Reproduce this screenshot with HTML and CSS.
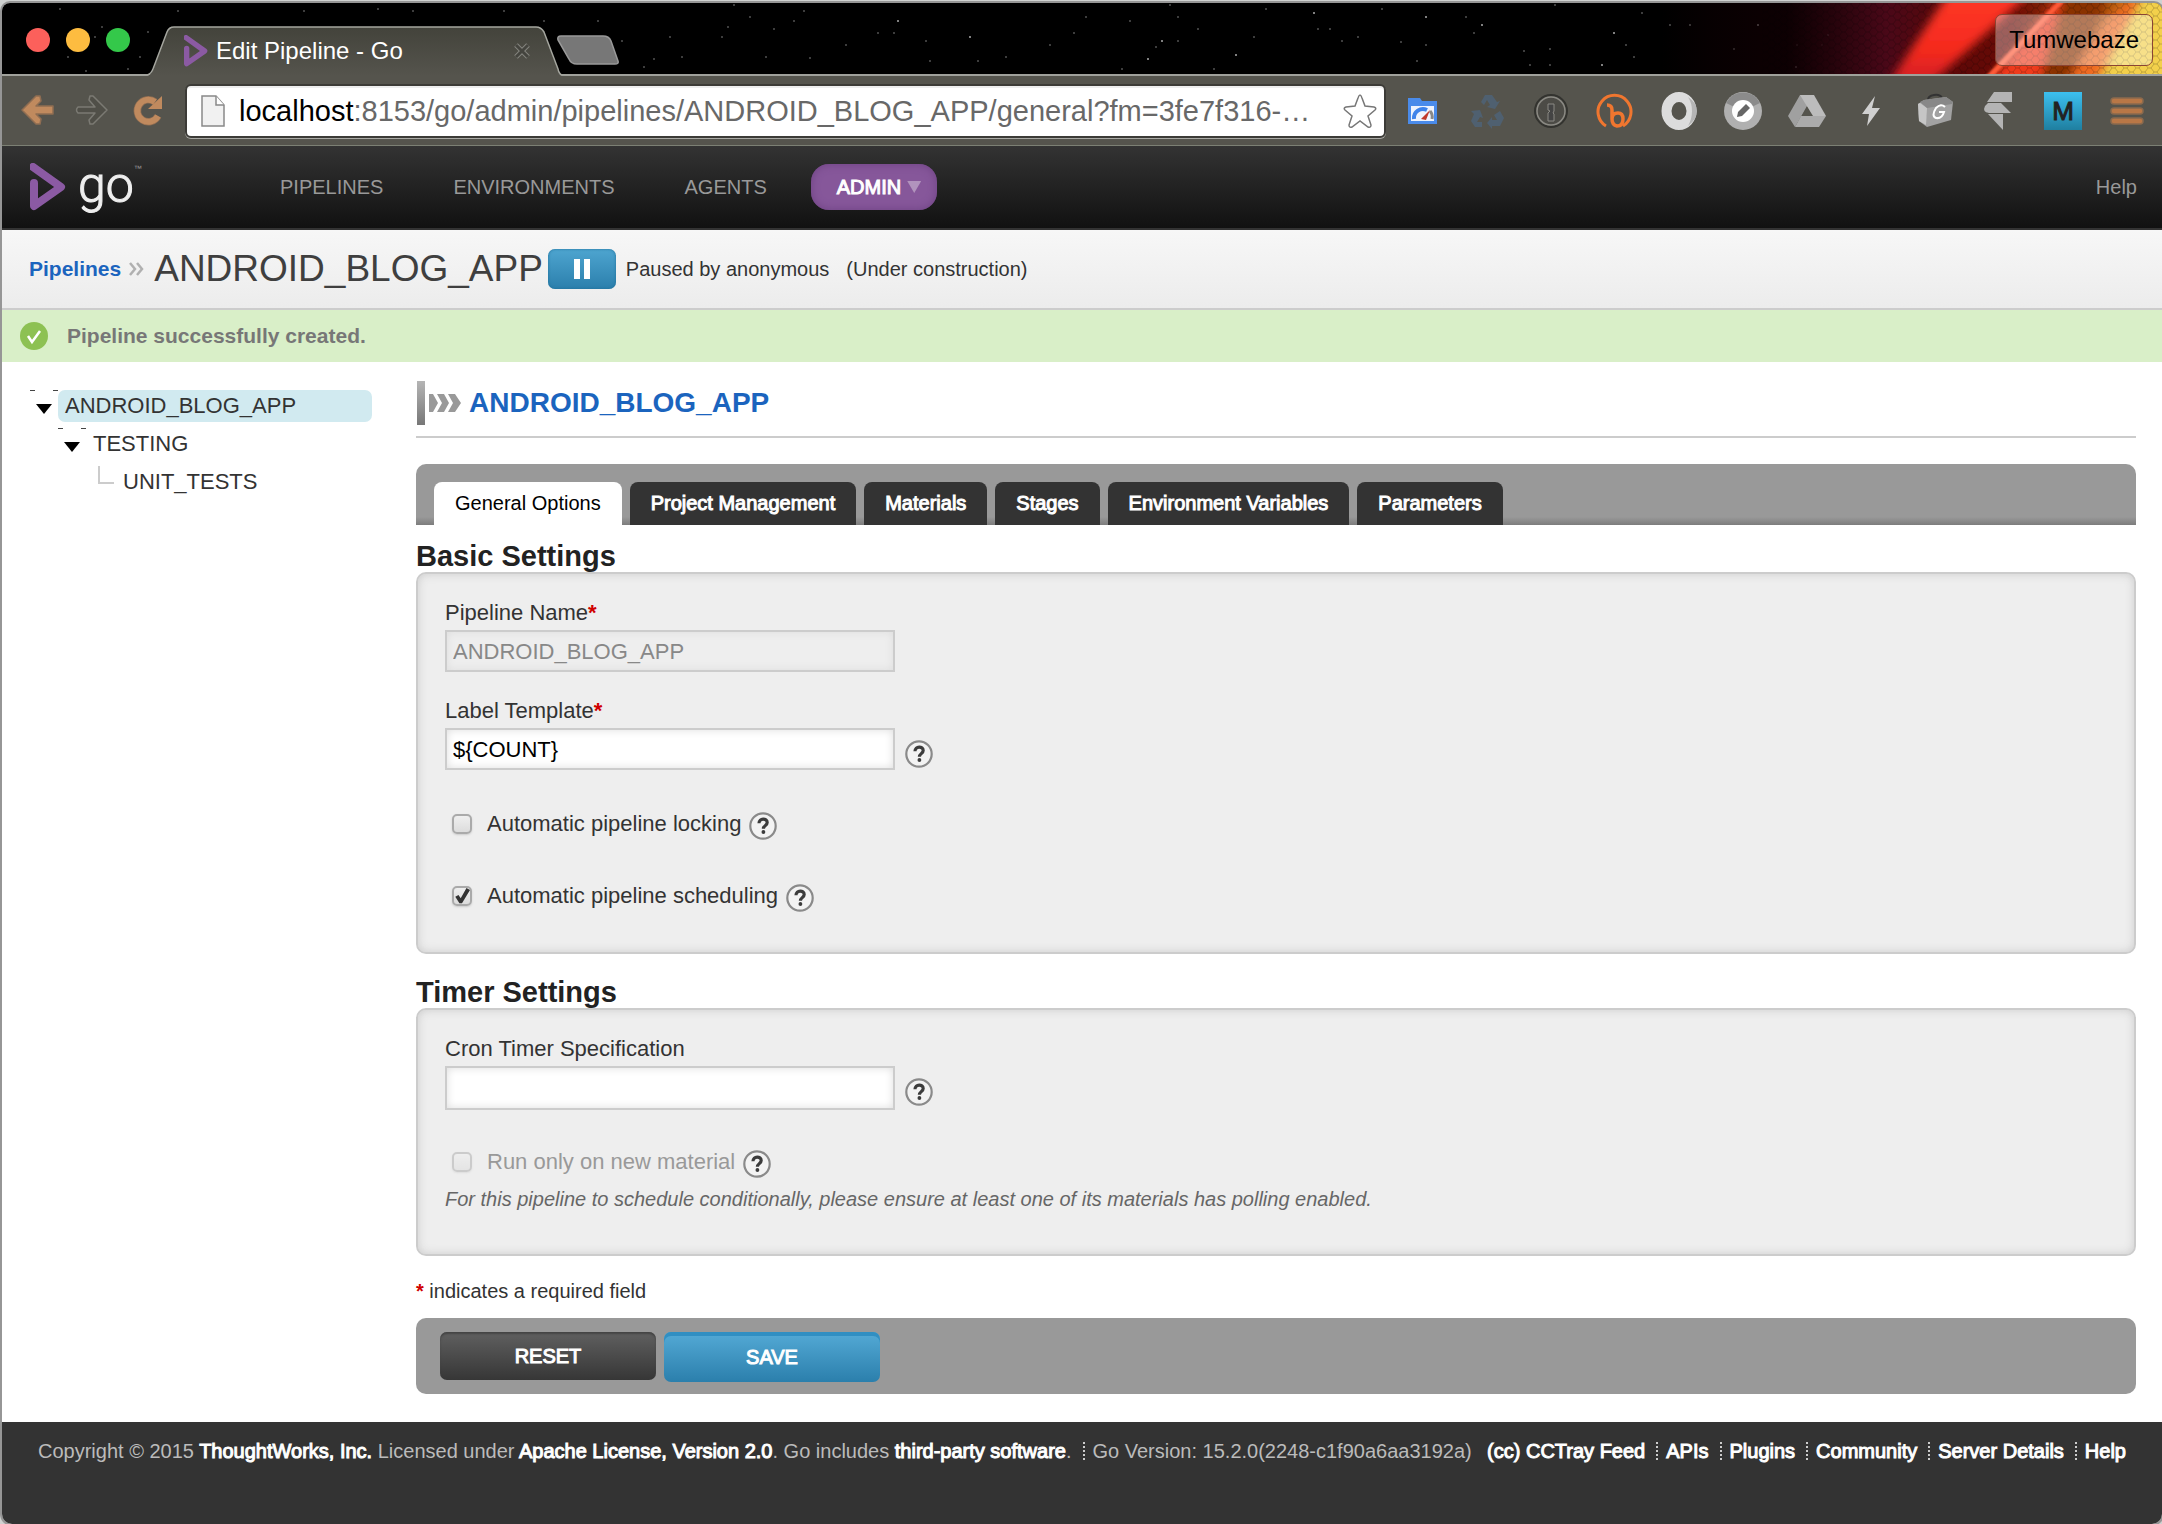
FILE: index.html
```html
<!DOCTYPE html>
<html lang="en">
<head>
<meta charset="utf-8">
<title>Edit Pipeline - Go</title>
<link rel="stylesheet" href="styles.css">
</head>
<body>
<svg class="defs" aria-hidden="true">
  <defs>
    <symbol id="help" viewBox="0 0 28 28">
      <circle cx="14" cy="14" r="12.7" fill="#f3f3f3" stroke="#8a8a8a" stroke-width="2.2"/>
      <path d="M10 11.200c0-5.500 8.200-5.300 8.200-.7 0 3-3.800 3.200-3.800 6.200" fill="none" stroke="#3c3c3c" stroke-width="3.200"/>
      <circle cx="14.400" cy="20" r="1.900" fill="#3c3c3c"/>
    </symbol>
    <symbol id="go-mark" viewBox="0 0 36 48">
      <path d="M3 4L31 24 4 43V20" fill="none" stroke="#8b5aa3" stroke-width="8" stroke-linecap="round" stroke-linejoin="round"/>
    </symbol>
  </defs>
</svg>

<div class="window">
  <div class="tabstrip">
    <svg class="stars" aria-hidden="true"><path stroke="#3d3d3d" stroke-width="2" d="M57 6h2M175 8h2M301 8h2M375 6h2M410 8h2M501 8h2M541 18h2M595 18h2M667 34h2M619 38h2M99 24h2M145 29h2M92 34h2M65 54h2M137 54h2M83 68h2M125 66h2M679 54h2M641 64h2M651 56h2M731 2h2M747 14h2M801 8h2M725 24h2M719 34h2M771 26h2M791 18h2M875 30h2M891 30h2M843 42h2M763 54h2M807 55h2M975 58h2M927 58h2M1003 54h2M923 38h2M1047 42h2M1071 30h2M1083 14h2M1127 18h2M1167 2h2M1175 14h2M1153 44h2M1175 38h2M1119 66h2M1195 26h2M1211 66h2M1251 34h2M1263 6h2M1315 26h2M1327 26h2M1339 38h2M1355 34h2M1379 6h2M1398 39h2M1463 14h2M1471 30h2M1423 42h2M1414 58h2M1552 2h2M1639 10h2M1667 22h2M1687 22h2M1521 48h2M1547 46h2M1527 62h2M1547 62h2M1631 54h2M1623 42h2M1794 42h2M1819 42h2M1731 46h2"/><path stroke="#808080" stroke-width="2" d="M895 18h2M967 34h2M1159 38h2M1145 56h2M1233 52h2M1311 10h2M1423 14h2M1479 22h2M1611 30h2M1599 62h2M1755 22h2M1793 64h2M1825 32h2M1895 50h2"/></svg>
    <svg class="flare" viewBox="1662 3 500 72" preserveAspectRatio="xMaxYMin slice" aria-hidden="true">
      <defs>
        <linearGradient id="glow"><stop offset="0" stop-color="#180004" stop-opacity="0"/><stop offset=".25" stop-color="#100003" stop-opacity=".8"/><stop offset=".45" stop-color="#4a0818"/><stop offset=".58" stop-color="#5a0808"/><stop offset=".7" stop-color="#6a0a04"/><stop offset=".88" stop-color="#a84a0a"/><stop offset="1" stop-color="#d99a20"/></linearGradient>
        <linearGradient id="beam" x1="0" y1="1" x2="0" y2="0"><stop offset="0" stop-color="#c81c24"/><stop offset=".4" stop-color="#f52a1e"/><stop offset="1" stop-color="#ff3a28"/></linearGradient>
        <pattern id="hex" width="12" height="8" patternUnits="userSpaceOnUse"><path d="M0 4h3l3-4h3l3 4M3 4l3 4h3l3-4" fill="none" stroke="#000" stroke-opacity=".2"/></pattern>
        <filter id="soft" x="-20%" y="-20%" width="140%" height="140%"><feGaussianBlur stdDeviation="5"/></filter>
        <filter id="fine"><feGaussianBlur stdDeviation="1"/></filter>
      </defs>
      <rect x="1662" y="3" width="500" height="72" fill="url(#glow)"/>
      <path d="M1985 85L2066 -10H2084L2050 85z" fill="#f03a1c" filter="url(#soft)"/>
      <path d="M2040 85L2066 -10H2110L2070 85z" fill="#8a3206" filter="url(#soft)"/>
      <path d="M2064 85L2106 20L2140 -10H2150L2100 85z" fill="#ef6a20" filter="url(#soft)"/>
      <path d="M2092 90L2146 -10H2190V90z" fill="#f3d04c" filter="url(#soft)"/>
      <rect x="1762" y="3" width="400" height="72" fill="url(#hex)"/>
      <path d="M1884 90L1952 -12H2036L1924 90z" fill="url(#beam)" filter="url(#soft)"/>
      <path d="M1984 78L2059 0H2066L1992 78z" fill="#ff5a38" filter="url(#fine)"/>
    </svg>
    <div class="lights"><button class="light red" aria-label="Close"></button><button class="light amber" aria-label="Minimise"></button><button class="light green" aria-label="Zoom"></button></div>
    <div class="browser-tab">
      <svg class="tab-shape" viewBox="0 0 415 50" aria-hidden="true">
        <defs><linearGradient id="tabfill" x1="0" y1="0" x2="0" y2="1"><stop offset="0" stop-color="#43433b"/><stop offset="1" stop-color="#55544d"/></linearGradient></defs>
        <path d="M0 50q4-1 6-6L20 6q2-5 7-5H389q5 0 8 5L411 44q1 5 4 6z" fill="url(#tabfill)"/>
        <path d="M0 49q4-1 6-6L20 6q2-5 7-5H389q5 0 8 5L411 43q1 5 4 6" fill="none" stroke="#a5a69f" stroke-width="1.5"/>
      </svg>
      <svg class="favicon" aria-hidden="true"><use href="#go-mark"/></svg>
      <span class="tab-title">Edit Pipeline - Go</span>
      <button class="tab-close" aria-label="Close tab"><svg viewBox="0 0 18 18"><path d="M3 3l12 12M15 3L3 15" stroke="#85857f" stroke-width="5"/><path d="M3 3l12 12M15 3L3 15" stroke="#44443e" stroke-width="3"/></svg></button>
    </div>
    <button class="new-tab" aria-label="New tab"><svg viewBox="0 0 62 30"><path d="M4 1H46q6 0 8 5L61 26q1 3-3 3H20q-6 0-8-5L1 5Q0 1 4 1z" fill="#777" stroke="#999" stroke-width="1.5"/></svg></button>
    <button class="profile">Tumwebaze</button>
  </div>

  <div class="toolbar">
    <button class="tool" aria-label="Back"><svg viewBox="0 0 38 38"><path d="M18 4L4 18l14 14h4l1-5-5-5h17v-8H18l5-5-1-5z" fill="#c08a5e" stroke="#8f6d52" stroke-width="1.5" stroke-linejoin="round"/></svg></button>
    <button class="tool" aria-label="Forward"><svg viewBox="0 0 38 38"><path d="M20 4l14 14-14 14h-3l-1-4 6-7H5q-3-3 0-6h17l-6-7 1-4z" fill="#504f48" stroke="#7b7a73" stroke-width="1.5" stroke-linejoin="round"/></svg></button>
    <button class="tool" aria-label="Reload"><svg viewBox="0 0 38 38"><path d="M30 24a11 11 0 1 1-3-14" fill="none" stroke="#8f6d52" stroke-width="7.5"/><path d="M30 24a11 11 0 1 1-3-14" fill="none" stroke="#c08a5e" stroke-width="6"/><path d="M34 4v13H20z" fill="#c08a5e"/></svg></button>
    <div class="omnibox">
      <svg class="page-icon" viewBox="0 0 24 32" aria-hidden="true"><path d="M1 1H15l8 9V31H1z" fill="#f1f1f1" stroke="#888" stroke-width="1.5"/><path d="M15 1v9h8" fill="#fff" stroke="#888" stroke-width="1.5"/></svg>
      <div class="url" role="textbox" aria-label="Address"><b>localhost</b>:8153/go/admin/pipelines/ANDROID_BLOG_APP/general?fm=3fe7f316-…</div>
      <button class="star" aria-label="Bookmark"><svg viewBox="0 0 36 36"><path d="M18 2q1 0 2 3l3 8 9 1q3 1 1 3l-7 6 3 9q0 3-3 2l-8-6-8 6q-3 1-3-2l3-9-7-6q-2-2 1-3l9-1 3-8q1-3 2-3z" fill="#fff" stroke="#777" stroke-width="1.5"/></svg></button>
    </div>
    <div class="extensions">
      <button class="ext" aria-label="Page speed"><svg viewBox="0 0 38 38"><path d="M4 6h12l2 3h15v23H4z" fill="#4a8bea"/><path d="M7 14h23v15H7z" fill="#eef3fd"/><path d="M10 27a9 9 0 0 1 13-9" fill="none" stroke="#3f83ea" stroke-width="4"/><path d="M26 19a9 9 0 0 1 2 8" fill="none" stroke="#888" stroke-width="3"/><path d="M17 27l9-9-4 10z" fill="#c0392b"/></svg></button>
      <button class="ext" aria-label="Recycle"><svg viewBox="0 0 38 38" fill="#4f6070"><path d="M13 10l4-7h7l5 7 3-1-5 8-8-2 3-2-3-5-3 5zM3 19l9-1 3 8-3-1-3 5h5v5H7l-4-6 3-7zM36 26l-4 8h-8v3l-5-6 5-6v3h5l-3-5 6-4z"/></svg></button>
      <button class="ext" aria-label="Password manager"><svg viewBox="0 0 38 38" fill="none"><circle cx="19" cy="19" r="16" fill="#4c4b46" stroke="#33332f" stroke-width="2"/><circle cx="19" cy="19" r="14" stroke="#8a8983" stroke-width="1.5"/><path d="M16 12h6v7l-1 2 1 1v7h-6v-8l2-2-2-1z" fill="#444" stroke="#8a8983"/></svg></button>
      <button class="ext" aria-label="Bitly"><svg viewBox="0 0 38 38" fill="none" stroke="#f0762f" stroke-width="3.5"><path d="M10 34A16.500 16.500 0 1 1 27 34" stroke-width="3"/><path d="M11 13q5 0 5 5v9q0 6 5 7 6 0 6-7 0-6-5-6-6 0-6 6"/></svg></button>
      <button class="ext" aria-label="Octo"><svg viewBox="0 0 38 38"><ellipse cx="19" cy="19" rx="12.500" ry="14" fill="none" stroke="#dcdcdc" stroke-width="10"/><path d="M28 5q9 6 9 14t-9 15q4-7 4-15t-4-14z" fill="#b5b5b5"/></svg></button>
      <button class="ext" aria-label="Editor"><svg viewBox="0 0 38 38"><circle cx="19" cy="19" r="19" fill="#b0b0b0"/><path d="M2 11a19 19 0 0 1 34 0L19 19z" fill="#8b8b8b"/><circle cx="19" cy="19" r="11" fill="#fff"/><path d="M13 25l1-5 8-8 4 4-8 8z" fill="#666"/></svg></button>
      <button class="ext" aria-label="Drive"><svg viewBox="0 0 38 38"><path d="M12 3h14L19 14 7 35 0 24z" fill="#a0a0a0"/><path d="M12 3h14l12 21H25z" fill="#bcbcbc"/><path d="M38 24l-7 11H7l6-11z" fill="#ababab"/><path d="M19 15l5 9H14z" fill="#55544d"/></svg></button>
      <button class="ext" aria-label="Lightning"><svg viewBox="0 0 38 38"><path d="M23 4L10 22h7l-2 12 13-18h-8z" fill="#d0d0d0"/></svg></button>
      <button class="ext" aria-label="Toolbox"><svg viewBox="0 0 38 38"><path d="M12 8q0-4 6-5t8 3" fill="none" stroke="#333" stroke-width="2"/><path d="M2 12l6-4 22-3 7 5-2 18-24 7-8-6z" fill="#a2a2a2"/><path d="M2 12l2-1 7 5-1 17-7-4z" fill="#c6c6c6"/><path d="M4 10l4-2 22-3 7 5-1 2-25 4z" fill="#888"/><path d="M29 15q-4-4-9 1-5 8 0 10 6 1 8-6h-5" fill="none" stroke="#fff" stroke-width="2"/></svg></button>
      <button class="ext" aria-label="Layers"><svg viewBox="0 0 38 38" fill="#b4b4b4"><path d="M14 0h18v10H7zM8 11h13l10 10H9q-7-1-4-7zM8 22h15v16z"/></svg></button>
      <button class="ext ext-m" aria-label="M">M</button>
      <button class="ext" aria-label="Menu"><svg viewBox="0 0 38 38"><g fill="#b97746" stroke="#8b6a4d" stroke-width="1.5"><rect x="3" y="6" width="32" height="6" rx="3"/><rect x="3" y="16" width="32" height="6" rx="3"/><rect x="3" y="26" width="32" height="6" rx="3"/></g></svg></button>
    </div>
  </div>

  <header class="app-header">
    <a class="logo" href="#" aria-label="Go home"><svg aria-hidden="true"><use href="#go-mark"/></svg><span>go</span><small>™</small></a>
    <nav class="main-nav">
      <a href="#">PIPELINES</a><a href="#">ENVIRONMENTS</a><a href="#">AGENTS</a><a class="current" href="#">ADMIN<i></i></a>
    </nav>
    <a class="help-link" href="#">Help</a>
  </header>

  <div class="page-title">
    <a href="#">Pipelines</a>
    <svg class="sep" viewBox="0 0 16 14" aria-hidden="true"><path d="M2 1l5 6-5 6M9 1l5 6-5 6" fill="none" stroke="#b0b0b0" stroke-width="2.500"/></svg>
    <h1>ANDROID_BLOG_APP</h1>
    <button class="pause" aria-label="Unpause"><svg viewBox="0 0 16 20"><path d="M0 0h6v20H0zM10 0h6v20h-6z" fill="#fff"/></svg></button>
    <span class="paused">Paused by anonymous</span><span>(Under construction)</span>
  </div>

  <div class="flash">
    <svg viewBox="0 0 28 28" aria-hidden="true"><circle cx="14" cy="14" r="14" fill="#8dc153"/><path d="M8 14l4 6 8-11" fill="none" stroke="#fff" stroke-width="2.500"/></svg>
    <span>Pipeline successfully created.</span>
  </div>

  <div class="content">
    <ul class="tree">
      <li><i class="caret"></i><a class="selected" href="#">ANDROID_BLOG_APP</a></li>
      <li class="level-2"><i class="caret"></i><a href="#">TESTING</a></li>
      <li class="level-3"><i class="elbow"></i><a href="#">UNIT_TESTS</a></li>
    </ul>

    <main class="editor">
      <h2><svg viewBox="0 0 46 46" aria-hidden="true"><defs><linearGradient id="bar" x1="0" y1="0" x2="0" y2="1"><stop offset="0" stop-color="#b5b5b5"/><stop offset="1" stop-color="#777"/></linearGradient></defs><path d="M1 1h8v44H1z" fill="url(#bar)"/><path d="M13 14h4l5 9-5 9h-4zM21 14h7l5 9-5 9h-7l5-9zM32 14h7l6 9-6 9h-7l5-9z" fill="#999"/></svg><a href="#">ANDROID_BLOG_APP</a></h2>

      <nav class="tabs">
        <a class="active" href="#">General Options</a><a href="#">Project Management</a><a href="#">Materials</a><a href="#">Stages</a><a href="#">Environment Variables</a><a href="#">Parameters</a>
      </nav>

      <form>
        <h3>Basic Settings</h3>
        <section class="panel">
          <label class="caption" for="name">Pipeline Name<em>*</em></label>
          <div class="field"><input class="text" id="name" type="text" value="ANDROID_BLOG_APP" disabled></div>
          <label class="caption next" for="template">Label Template<em>*</em></label>
          <div class="field"><input class="text" id="template" type="text" value="${COUNT}"><svg class="help"><use href="#help"/></svg></div>
          <div class="check"><input id="locking" type="checkbox"><label for="locking">Automatic pipeline locking</label><svg class="help"><use href="#help"/></svg></div>
          <div class="check"><input id="scheduling" type="checkbox" checked><label for="scheduling">Automatic pipeline scheduling</label><svg class="help"><use href="#help"/></svg></div>
        </section>

        <h3>Timer Settings</h3>
        <section class="panel timer">
          <label class="caption" for="cron">Cron Timer Specification</label>
          <div class="field"><input class="text" id="cron" type="text"><svg class="help"><use href="#help"/></svg></div>
          <div class="check"><input id="newonly" type="checkbox" disabled><label for="newonly">Run only on new material</label><svg class="help"><use href="#help"/></svg></div>
          <p class="note">For this pipeline to schedule conditionally, please ensure at least one of its materials has polling enabled.</p>
        </section>

        <p class="required"><em>*</em> indicates a required field</p>
        <div class="actions"><button class="reset" type="reset">RESET</button><button class="save" type="submit">SAVE</button></div>
      </form>
    </main>
  </div>

  <footer class="footer">
    <p>Copyright © 2015 <a href="#">ThoughtWorks, Inc.</a> Licensed under <a href="#">Apache License, Version 2.0</a>. Go includes <a href="#">third-party software</a>.</p>
    <p class="version">Go Version: 15.2.0(2248-c1f90a6aa3192a)</p>
    <ul><li><a href="#">(cc) CCTray Feed</a></li><li><a href="#">APIs</a></li><li><a href="#">Plugins</a></li><li><a href="#">Community</a></li><li><a href="#">Server Details</a></li><li><a href="#">Help</a></li></ul>
  </footer>
</div>
</body>
</html>
```
FILE: styles.css
```css
* { box-sizing: border-box; }
body { margin: 0; background: #d0d2d1; font: 20px/24px "Liberation Sans", Arial, sans-serif; color: #333; }
h1, h2, h3, p, ul { margin: 0; padding: 0; font-weight: normal; }
ul { list-style: none; }
a { text-decoration: none; color: inherit; }
button { margin: 0; padding: 0; border: 0; background: none; font: inherit; color: inherit; }
button svg { display: block; width: 100%; height: 100%; }
.defs { position: absolute; width: 0; height: 0; }

.window { display: flex; flex-direction: column; min-height: calc(100vh - 3px); margin: 3px 0 0 2px; border-radius: 8px 8px 10px 10px; overflow: hidden; background: #fff; box-shadow: 0 0 0 2px #969696; }

/* browser chrome */
.tabstrip { position: relative; display: flex; height: 73px; background: #000; border-bottom: 2px solid #a0a19b; }
.stars { position: absolute; inset: 0; width: 100%; height: 100%; }
.flare { position: absolute; right: 0; top: 0; width: 500px; height: 71px; }
.lights { position: relative; display: flex; gap: 16px; padding: 25px 0 0 24px; width: 145px; }
.light { width: 24px; height: 24px; border-radius: 50%; }
.red { background: #fc605b; }
.amber { background: #fdbc40; }
.green { background: #34c84a; }
.browser-tab { position: relative; display: flex; align-items: center; width: 415px; height: 50px; margin-top: 23px; padding: 0 31px 0 37px; }
.tab-shape { position: absolute; inset: 0; width: 415px; height: 50px; }
.favicon { position: relative; width: 24px; height: 32px; }
.tab-title { position: relative; flex: 1; margin-left: 8px; font-size: 24px; color: #fff; }
.tab-close { position: relative; width: 18px; height: 18px; }
.new-tab { position: relative; width: 62px; height: 30px; margin: 32px 0 0 -5px; }
.profile { position: relative; margin: 11px 9px 0 auto; height: 52px; padding: 0 13px; font-size: 24px; color: #000; border: 1px solid #8a4433; border-radius: 7px; background: rgba(255, 255, 255, .35); }

.toolbar { display: flex; align-items: center; height: 70px; padding: 0 16px; background: #55544d; border-bottom: 1px solid #7c8074; }
.tool { width: 38px; height: 38px; margin-right: 17px; }
.omnibox { flex: 1; display: flex; align-items: center; height: 54px; margin-left: 2px; padding: 0 6px 0 14px; background: #fff; border: 2px solid #3c3b37; border-radius: 6px; box-shadow: 0 1px #a9a9a4, inset 0 2px #eee; }
.page-icon { width: 24px; height: 32px; margin-right: 14px; }
.url { flex: 1; width: 0; font-size: 29px; line-height: 36px; color: #686868; white-space: nowrap; overflow: hidden; }
.url b { font-weight: normal; color: #000; }
.star { width: 36px; height: 36px; }
.extensions { display: flex; gap: 26px; margin-left: 18px; }
.ext { width: 38px; height: 38px; }
.ext-m { background: linear-gradient(#3cc0f0, #1f7fa0); font-size: 26px; color: #222; -webkit-text-stroke: 1px #222; }

/* application header */
.app-header { display: flex; align-items: center; height: 84px; padding: 0 25px 0 28px; background: linear-gradient(#333, #111); border-bottom: 2px solid #333; color: #999; }
.logo { display: flex; align-items: center; width: 224px; color: #eee; }
.logo svg { width: 36px; height: 48px; margin-right: 12px; }
.logo span { padding-bottom: 4px; font: 300 50px/56px Roboto, sans-serif; -webkit-text-stroke: 1px #eee; }
.logo small { align-self: flex-start; font-size: 8px; color: #999; }
.main-nav { display: flex; gap: 18px; flex: 1; }
.main-nav a { padding: 11px 26px; }
.main-nav .current { display: flex; align-items: center; gap: 6px; padding: 11px 16px 11px 26px; color: #fff; -webkit-text-stroke: 1px #fff; background: #86579a; border-radius: 18px; box-shadow: inset 0 0 8px #6d4282; }
.current i { width: 14px; height: 12px; background: #b193bd; clip-path: polygon(0 0, 100% 0, 50% 100%); }

.page-title { display: flex; align-items: center; height: 80px; padding: 0 27px; background: linear-gradient(#f7f7f7, #ececec); border-bottom: 2px solid #ccc; }
.page-title a { font-size: 21px; font-weight: bold; color: #1b64be; }
.sep { width: 16px; height: 14px; margin: 0 10px 0 7px; }
.page-title h1 { font-size: 37px; line-height: 44px; color: #3f3f3f; }
.pause { width: 68px; height: 40px; margin: 0 10px 0 5px; border-radius: 7px; background: linear-gradient(#4ea5d0, #2b7fac); box-shadow: inset 0 0 3px #1f7099; }
.pause svg { width: 16px; height: 20px; margin: auto; }
.paused { margin-right: 17px; }

.flash { display: flex; align-items: center; gap: 19px; height: 52px; padding-left: 18px; background: #d9efc8; font-size: 21px; font-weight: bold; color: #777; }
.flash svg { width: 28px; height: 28px; }

/* two-column content */
.content { display: flex; gap: 44px; padding: 0 26px 28px 28px; }
.tree { width: 342px; padding-top: 28px; font-size: 22px; }
.tree li { display: flex; margin-bottom: 6px; line-height: 32px; }
.tree a { flex: 1; padding-left: 7px; border-radius: 7px; }
.tree .selected { background: #d1eaf0; }
.caret { width: 28px; height: 32px; background: linear-gradient(#444, #444) 0 0 / 5px 1px no-repeat, linear-gradient(#444, #444) 100% 0 / 5px 1px no-repeat; }
.caret::before { content: ""; display: block; width: 16px; height: 10px; margin: 14px 0 0 6px; background: #000; clip-path: polygon(0 0, 100% 0, 50% 100%); }
.level-2 { padding-left: 28px; }
.level-3 { padding-left: 68px; }
.elbow { width: 16px; height: 18px; margin-right: 2px; border: solid #ccc; border-width: 0 0 2px 2px; }

.editor { flex: 1; }
.editor h2 { display: flex; align-items: center; height: 76px; padding-top: 8px; border-bottom: 2px solid #ccc; font-size: 28px; line-height: 34px; font-weight: bold; color: #1b64be; }
.editor h2 svg { width: 46px; height: 46px; margin-right: 7px; }
.tabs { display: flex; gap: 8px; margin-top: 26px; padding: 18px 18px 0; border-radius: 10px 10px 0 0; background: linear-gradient(to top, #7d7d7d, #999 8px); }
.tabs a { padding: 9px 21px 10px; border-radius: 8px 8px 0 0; background: #333; color: #fff; -webkit-text-stroke: 1px #fff; }
.tabs .active { background: #fff; color: #000; -webkit-text-stroke: 0; }

h3 { margin-top: 22px; font-size: 29px; line-height: 32px; font-weight: bold; color: #222; }
.tabs + form h3:first-child { margin-top: 15px; }
.panel { padding: 26px 27px 40px; border: 2px solid #ccc; border-radius: 10px; background: #eee; box-shadow: inset 0 0 10px #ccc; font-size: 22px; line-height: 26px; }
.timer { padding-bottom: 43px; }
em { font-style: normal; font-weight: bold; color: #d00000; }
.caption { display: block; margin-bottom: 4px; }
.caption.next { margin-top: 26px; }
.field { display: flex; align-items: flex-start; }
.text { width: 450px; height: 42px; padding: 1px 6px 0; border: 2px solid #ccc; border-radius: 0; background: #fff; box-shadow: inset 0 0 8px #ddd; font: inherit; color: #000; }
.text:disabled { background: #eee; color: #888; }
.timer .text { height: 44px; }
.help { width: 28px; height: 28px; margin-left: 8px; }
.field .help { margin: 12px 0 0 10px; }
.check { display: flex; align-items: flex-start; margin-top: 44px; line-height: 24px; }
.field + .check { margin-top: 42px; }
.check input { appearance: none; width: 20px; height: 20px; margin: 2px 15px 0 7px; border: 2px solid #aaa; border-radius: 5px; background: linear-gradient(#efefef, #dcdcdc); box-shadow: 0 1px 2px #ccc; }
.check input:checked::before { content: ""; display: block; width: 16px; height: 16px; background: #333; clip-path: polygon(8% 54%, 28% 44%, 42% 64%, 78% 0, 100% 12%, 50% 96%, 34% 96%); }
.check input:disabled { opacity: .5; }
.check input:disabled + label { color: #999; }
.timer .field + .check { margin-top: 40px; }
.note { margin-top: 9px; font-size: 20px; line-height: 24px; font-style: italic; color: #666; }
.required { margin-top: 23px; }
.actions { display: flex; align-items: flex-start; gap: 8px; height: 76px; margin-top: 15px; padding: 14px 24px; border-radius: 10px; background: #999; }
.actions button { width: 216px; border-radius: 7px; color: #fff; -webkit-text-stroke: 1px #fff; }
.actions .reset { height: 48px; background: linear-gradient(#606060, #363636); box-shadow: inset 0 2px 2px #444; }
.actions .save { height: 50px; background: linear-gradient(#54aad6, #2b7fac); box-shadow: inset 0 4px #318fc2; }

.footer { flex: 1; display: flex; padding: 17px 36px 0; background: #333; color: #bbb; white-space: nowrap; }
.footer a { color: #fff; -webkit-text-stroke: 1px #fff; }
.footer ul { display: flex; margin-left: auto; }
.footer li + li, .version { margin-left: 11px; padding-left: 10px; background: repeating-linear-gradient(#ccc 0 2px, transparent 2px 4px) 0 3px / 2px 18px no-repeat; }
```
